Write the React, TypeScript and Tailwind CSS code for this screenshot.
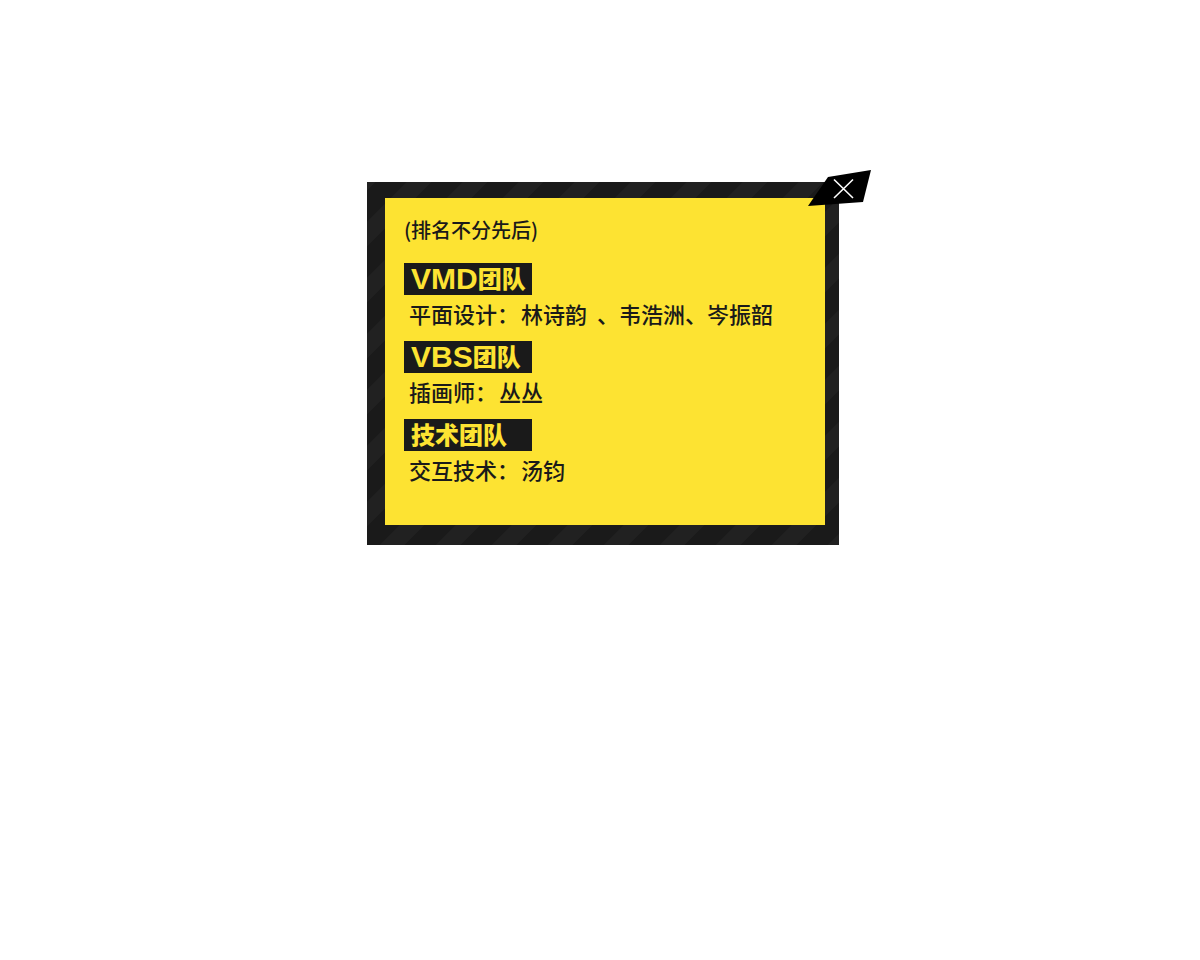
type Team = { latin?: string; name: string; role: string; members: string };

const teams: Team[] = [
  { latin: 'VMD', name: '团队', role: '平面设计：', members: '林诗韵  、韦浩洲、岑振韶' },
  { latin: 'VBS', name: '团队', role: '插画师：', members: '丛丛' },
  { name: '技术团队', role: '交互技术：', members: '汤钧' },
];

function TeamBlock({ team }: { team: Team }) {
  return (
    <section>
      <h2 className="flex h-8 w-32 items-center bg-[#1a1a1a] pl-[7px] leading-8 text-[#fde332]">
        {team.latin && (
          <span className="font-['Liberation_Sans',sans-serif] text-[30px] font-bold">{team.latin}</span>
        )}
        <span className="pb-0.5 text-2xl leading-7 font-black">{team.name}</span>
      </h2>
      <p className="flex gap-0.5 pb-1 pl-[5px] text-[22px] leading-9 font-medium whitespace-pre">
        <span>{team.role}</span>
        <span>{team.members}</span>
      </p>
    </section>
  );
}

export default function App() {
  return (
    <main className="flex justify-center pt-[182px] pl-1.5 font-['Noto_Sans_CJK_SC',sans-serif] text-[#1a1a1a]">
      <div
        role="dialog"
        aria-label="团队"
        className="relative w-full max-w-[472px] bg-[linear-gradient(135deg,#212121_7%,#1a1a1a_8%,#1a1a1a_35%,#212121_36%,#212121_57%,#1a1a1a_58%,#1a1a1a_85%,#212121_86%)] bg-[length:56px_56px] pt-4 pr-3.5 pb-5 pl-[18px]"
      >
        <div className="flex flex-col gap-1.5 bg-[#fde332] pt-4 pb-[34px] pl-[19px]">
          <p className="mb-[11px] text-[20px] leading-8 font-medium">(排名不分先后)</p>
          {teams.map((team) => (
            <TeamBlock key={team.role} team={team} />
          ))}
        </div>
        <button type="button" aria-label="关闭" className="absolute -top-3 -right-8 cursor-pointer">
          <svg width="63" height="36" viewBox="0 0 63 36" className="block">
            <path d="M0 36 L20 7 L63 0 L55 32 Z" fill="#000" />
            <path d="M26 9.5 L45 28 M45 9.5 L26 28" stroke="#fff" strokeWidth="1.6" fill="none" />
          </svg>
        </button>
      </div>
    </main>
  );
}
